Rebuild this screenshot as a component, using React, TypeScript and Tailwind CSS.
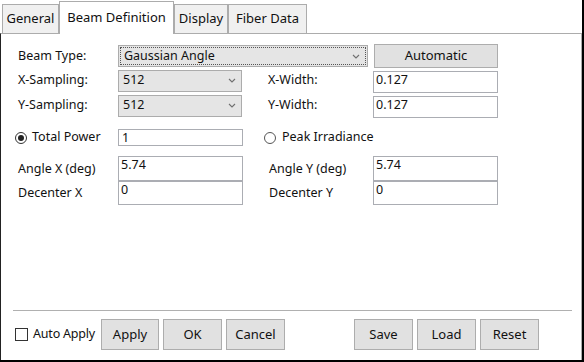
import React from 'react';

const Chevron = () => (
  <svg width="8" height="5" viewBox="0 0 8 5" className="shrink-0">
    <polyline points="1,1 4,4 7,1" fill="none" stroke="#707070" strokeWidth="1.1" />
  </svg>
);

type TabProps = { label: string; width: string; active?: boolean };

const Tab = ({ label, width, active }: TabProps) =>
  active ? (
    <div className={`${width} h-[33px] -mb-px bg-white border border-b-0 border-[#acacac] flex items-center justify-center z-10 text-[13px]`}>
      {label}
    </div>
  ) : (
    <div className={`${width} h-[29px] bg-[#f0f0f0] border border-b-0 border-[#acacac] flex items-center justify-center text-[13px]`}>
      {label}
    </div>
  );

const Combo = ({ value, width, focused }: { value: string; width: string; focused?: boolean }) => (
  <div className={`${width} h-[22px] bg-[#e5e5e5] border border-[#acacac] ${focused ? 'p-px' : ''}`}>
    <div className={`h-full flex items-center justify-between pr-[5px] ${focused ? 'border border-dotted border-[#555] pl-[3px]' : 'pl-[4px]'}`}>
      <span>{value}</span>
      <Chevron />
    </div>
  </div>
);

const Field = ({ value, height }: { value: string; height: string }) => (
  <div className={`w-[125px] ${height} bg-white border border-[#abadb3] pl-[2px] leading-[16px]`}>
    {value}
  </div>
);

const Button = ({ label, width, height }: { label: string; width: string; height: string }) => (
  <div className={`${width} ${height} bg-[#e1e1e1] border border-[#adadad] flex items-center justify-center text-[13px]`}>
    {label}
  </div>
);

export default function App() {
  return (
    <div className="w-[584px] h-[362px] bg-white flex flex-col text-[12.5px] text-[#111] border-r-[2px] border-b-[2px] border-black font-['Noto_Sans',sans-serif]">
      {/* Tabs */}
      <div className="flex items-end h-[33px] pl-[2px]">
        <Tab label="General" width="w-[57px]" />
        <Tab label="Beam Definition" width="w-[115px]" active />
        <Tab label="Display" width="w-[54px]" />
        <Tab label="Fiber Data" width="w-[79px]" />
      </div>

      {/* Panel */}
      <div className="flex-1 flex flex-col border-t border-r border-[#acacac] border-l border-l-[#222] pl-[17px]">
        <div className="flex items-center mt-[10px] h-[24px]">
          <div className="w-[100px]">Beam Type:</div>
          <Combo value="Gaussian Angle" width="w-[250px]" focused />
          <div className="ml-[6px]">
            <Button label="Automatic" width="w-[124px]" height="h-[24px]" />
          </div>
        </div>

        <div className="flex items-center mt-[1px] h-[23px]">
          <div className="w-[100px]">X-Sampling:</div>
          <Combo value="512" width="w-[124px]" />
          <div className="w-[131px] pl-[26px]">X-Width:</div>
          <div className="mt-[2px]">
            <Field value="0.127" height="h-[22px]" />
          </div>
        </div>

        <div className="flex items-center mt-[2px] h-[23px]">
          <div className="w-[100px]">Y-Sampling:</div>
          <Combo value="512" width="w-[124px]" />
          <div className="w-[131px] pl-[26px]">Y-Width:</div>
          <div className="mt-[2px]">
            <Field value="0.127" height="h-[22px]" />
          </div>
        </div>

        <div className="flex items-center mt-[12px] h-[17px]">
          <div className="w-[100px] flex items-center -ml-[3px] mr-[3px]">
            <span className="w-[12px] h-[12px] rounded-full border border-[#333] flex items-center justify-center mr-[5px]">
              <span className="w-[6px] h-[6px] rounded-full bg-[#222]" />
            </span>
            Total Power
          </div>
          <div className="w-[125px] h-[17px] bg-white border border-[#abadb3] pl-[3px] leading-[15px]">1</div>
          <div className="ml-[21px] flex items-center">
            <span className="w-[12px] h-[12px] rounded-full border border-[#555] mr-[6px]" />
            Peak Irradiance
          </div>
        </div>

        <div className="flex items-center mt-[10px] h-[25px]">
          <div className="w-[100px] mt-[2px]">Angle X (deg)</div>
          <Field value="5.74" height="h-[25px]" />
          <div className="w-[130px] pl-[26px] mt-[2px]">Angle Y (deg)</div>
          <Field value="5.74" height="h-[25px]" />
        </div>

        <div className="flex items-center h-[24px]">
          <div className="w-[100px] mt-[1px]">Decenter X</div>
          <Field value="0" height="h-[24px]" />
          <div className="w-[130px] pl-[26px] mt-[1px]">Decenter Y</div>
          <Field value="0" height="h-[24px]" />
        </div>

        <div className="flex-1" />

        {/* Footer */}
        <div className="border-t border-[#b0b0b0] ml-[-5px] mr-[9px]" />
        <div className="flex items-center -ml-[3px] mt-[8px] mb-[10px] h-[31px]">
          <div className="flex items-center w-[86px]">
            <span className="w-[13px] h-[13px] border border-[#333] bg-white mr-[5px]" />
            <span className="text-[12.5px] tracking-[-0.2px]">Auto Apply</span>
          </div>
          <Button label="Apply" width="w-[58px]" height="h-[31px]" />
          <div className="ml-[4px]"><Button label="OK" width="w-[59px]" height="h-[31px]" /></div>
          <div className="ml-[4px]"><Button label="Cancel" width="w-[59px]" height="h-[31px]" /></div>
          <div className="ml-[69px]"><Button label="Save" width="w-[59px]" height="h-[31px]" /></div>
          <div className="ml-[4px]"><Button label="Load" width="w-[59px]" height="h-[31px]" /></div>
          <div className="ml-[4px]"><Button label="Reset" width="w-[59px]" height="h-[31px]" /></div>
        </div>
      </div>
    </div>
  );
}
